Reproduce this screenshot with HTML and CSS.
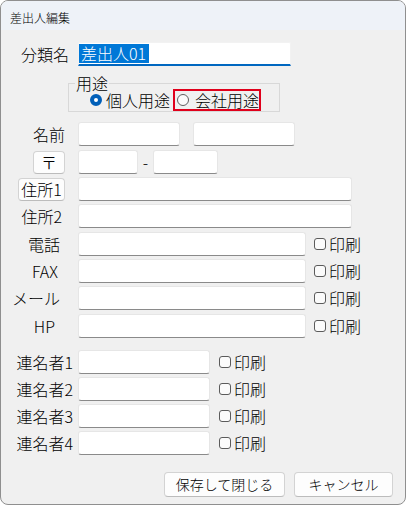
FILE: index.html
```html
<!DOCTYPE html>
<html lang="ja">
<head>
<meta charset="utf-8">
<title>差出人編集</title>
<link rel="stylesheet" href="styles.css">
</head>
<body>
<div class="window">
  <div class="titlebar">差出人編集</div>
  <div class="content">
    <div class="row row--first">
      <div class="label label--r9">分類名</div>
      <div class="input input--active input--w212"><span class="sel">差出人01</span></div>
    </div>

    <fieldset class="group">
      <legend class="group-legend">用途</legend>
      <div class="radios">
        <label class="radio"><span class="radio-dot radio-dot--on"></span>個人用途</label>
        <label class="radio radio--focus"><span class="radio-dot"></span>会社用途</label>
      </div>
    </fieldset>

    <div class="row row--after-group">
      <div class="label label--r13">名前</div>
      <div class="input input--w101"></div>
      <div class="input input--w101 input--gap14"></div>
    </div>

    <div class="row row--plus">
      <div class="label label--r13"><button class="btn btn--zip">〒</button></div>
      <div class="input input--w59"></div>
      <span class="dash">-</span>
      <div class="input input--w64"></div>
    </div>

    <div class="row">
      <div class="label label--r13"><button class="btn btn--addr">住所1</button></div>
      <div class="input input--w273"></div>
    </div>

    <div class="row">
      <div class="label label--r16">住所2</div>
      <div class="input input--w273"></div>
    </div>

    <div class="row row--plus">
      <div class="label label--r18">電話</div>
      <div class="input input--w227"></div>
      <label class="check"><span class="check-box"></span>印刷</label>
    </div>

    <div class="row">
      <div class="label label--r20">FAX</div>
      <div class="input input--w227"></div>
      <label class="check"><span class="check-box"></span>印刷</label>
    </div>

    <div class="row">
      <div class="label label--r18">メール</div>
      <div class="input input--w227"></div>
      <label class="check"><span class="check-box"></span>印刷</label>
    </div>

    <div class="row row--plus">
      <div class="label label--r23">HP</div>
      <div class="input input--w227"></div>
      <label class="check"><span class="check-box"></span>印刷</label>
    </div>

    <div class="row row--joint-first">
      <div class="label label--r5">連名者1</div>
      <div class="input input--w131"></div>
      <label class="check check--near"><span class="check-box"></span>印刷</label>
    </div>

    <div class="row">
      <div class="label label--r5">連名者2</div>
      <div class="input input--w131"></div>
      <label class="check check--near"><span class="check-box"></span>印刷</label>
    </div>

    <div class="row">
      <div class="label label--r5">連名者3</div>
      <div class="input input--w131"></div>
      <label class="check check--near"><span class="check-box"></span>印刷</label>
    </div>

    <div class="row">
      <div class="label label--r5">連名者4</div>
      <div class="input input--w131"></div>
      <label class="check check--near"><span class="check-box"></span>印刷</label>
    </div>

    <div class="row row--buttons">
      <button class="btn btn--action btn--save">保存して閉じる</button>
      <button class="btn btn--action btn--cancel">キャンセル</button>
    </div>
  </div>
</div>
</body>
</html>
```

FILE: styles.css
```css
html, body {
  margin: 0;
  padding: 0;
  background: #ffffff;
}

body {
  font-family: "Noto Sans CJK JP", "Noto Sans", sans-serif;
  font-weight: 300;
  color: #000;
}

.window {
  width: 406px;
  height: 505px;
  box-sizing: border-box;
  border: 1px solid #8f8f8f;
  border-radius: 8px;
  background: #f0f0f0;
  overflow: hidden;
  display: flex;
  flex-direction: column;
}

.titlebar {
  height: 29px;
  flex: none;
  box-sizing: border-box;
  background: #eef2f8;
  font-size: 12px;
  line-height: 29px;
  padding: 2px 0 0 9px;
}

.content {
  display: flex;
  flex-direction: column;
  padding-top: 12px;
  font-size: 16px;
}

.row {
  display: flex;
  align-items: center;
  height: 24px;
  margin-top: 3px;
  flex: none;
}

.row--first { margin-top: 0; }
.row--plus { margin-top: 4px; }
.row--after-group { margin-top: 10px; }
.row--joint-first { margin-top: 12px; }

.label {
  width: 77px;
  flex: none;
  box-sizing: border-box;
  display: flex;
  justify-content: flex-end;
  align-items: center;
  line-height: 24px;
  white-space: nowrap;
}

.label--r5 { padding-right: 5px; }
.label--r9 { padding-right: 9px; }
.label--r13 { padding-right: 13px; }
.label--r16 { padding-right: 16px; }
.label--r18 { padding-right: 18px; }
.label--r20 { padding-right: 20px; }
.label--r23 { padding-right: 23px; }

.input {
  height: 24px;
  flex: none;
  box-sizing: border-box;
  background: #fff;
  border: 1px solid #e6e6e6;
  border-bottom-color: #8a8a8a;
  border-radius: 3px;
}

.input--active {
  border-color: #f2f2f2;
  border-bottom: 2px solid #0067c0;
  border-radius: 2px 2px 0 0;
  display: flex;
  align-items: center;
}

.input--w59 { width: 60px; }
.input--w64 { width: 65px; }
.input--w101 { width: 102px; }
.input--w131 { width: 132px; }
.input--w212 { width: 213px; }
.input--w227 { width: 228px; }
.input--w273 { width: 274px; }
.input--gap14 { margin-left: 13px; }

.sel {
  background: #0078d7;
  color: #fff;
  line-height: 19px;
  padding: 0 3px 0 2px;
  margin-left: 0;
}

.dash {
  width: 15px;
  text-align: center;
  line-height: 24px;
}

.group {
  margin: 9px 0 0 67px;
  padding: 0 0 0 6px;
  width: 212px;
  min-width: 0;
  box-sizing: border-box;
  border: 1px solid #d8d8d8;
  border-radius: 0;
}

.group-legend {
  padding: 0 1px;
  font-size: 16px;
  line-height: 16px;
}

.radios {
  display: flex;
  align-items: center;
  margin-top: -2px;
  padding-left: 15px;
  height: 22px;
}

.radio {
  display: flex;
  align-items: center;
  gap: 4px;
  height: 22px;
  box-sizing: border-box;
  white-space: nowrap;
}

.radio--focus {
  margin-left: 3px;
  border: 2px solid #e0001b;
  padding: 0 0 0 2px;
  gap: 6px;
  width: 88px;
}

.radio-dot {
  width: 12px;
  height: 12px;
  box-sizing: border-box;
  border-radius: 50%;
  border: 1px solid #5f5f5f;
  background: #fbfbfb;
  flex: none;
}

.radio-dot--on {
  border: 4px solid #005fb8;
  background: #fff;
}

.check {
  display: flex;
  align-items: center;
  gap: 3px;
  margin-left: 8px;
  white-space: nowrap;
}

.check--near { margin-left: 9px; }

.check-box {
  width: 12px;
  height: 12px;
  box-sizing: border-box;
  border: 1px solid #5b5b5b;
  border-radius: 3px;
  background: #fbfbfb;
  flex: none;
}

.btn {
  font-family: "Noto Sans CJK JP", "Noto Sans", sans-serif;
  font-weight: 300;
  color: #000;
  box-sizing: border-box;
  background: #fdfdfd;
  border: 1px solid #d3d3d3;
  border-bottom-color: #bcbcbc;
  border-radius: 4px;
  padding: 0;
  margin: 0;
  display: flex;
  align-items: center;
  justify-content: center;
  white-space: nowrap;
}

.btn--zip {
  width: 32px;
  height: 23px;
  font-size: 16px;
}

.btn--addr {
  width: 47px;
  height: 23px;
  font-size: 16px;
}

.row--buttons {
  margin-top: 17px;
  justify-content: flex-end;
  padding-right: 12px;
  gap: 9px;
}

.btn--action {
  height: 25px;
  font-size: 14px;
}

.btn--save { width: 121px; }
.btn--cancel { width: 99px; }
```
